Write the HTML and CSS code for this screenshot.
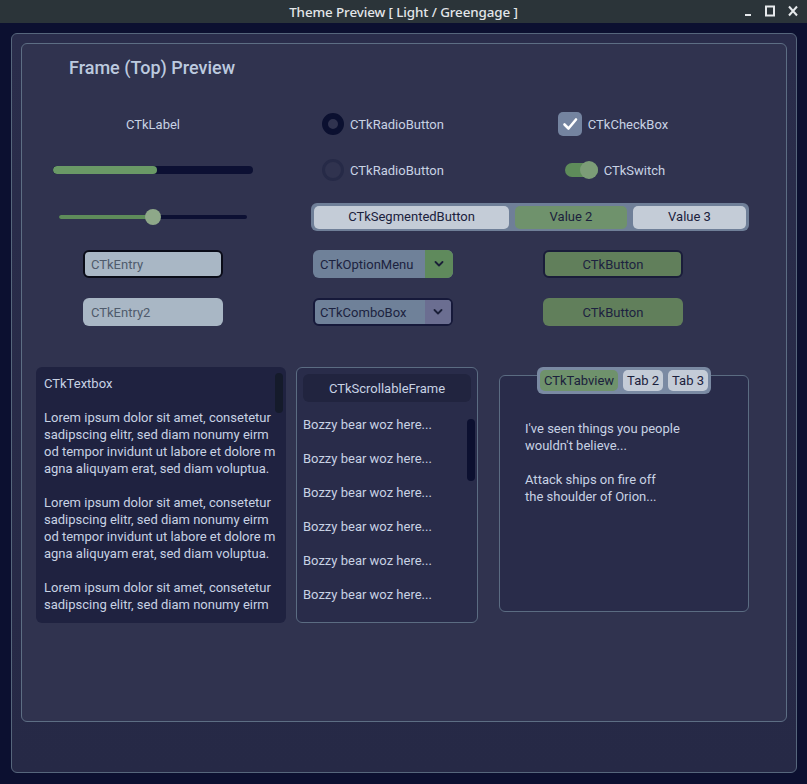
FILE: index.html
```html
<!DOCTYPE html>
<html>
<head>
<meta charset="utf-8">
<link rel="stylesheet" href="styles.css">
</head>
<body>
<div class="titlebar">
  <span class="title">Theme Preview [ Light / Greengage ]</span>
  <div class="controls">
    <svg width="10" height="12" viewBox="0 0 10 12"><rect x="2" y="9" width="6" height="2" fill="#e6e9ec"/></svg>
    <svg width="12" height="12" viewBox="0 0 12 12"><rect x="2" y="1.5" width="8" height="9" fill="none" stroke="#e6e9ec" stroke-width="2"/></svg>
    <svg width="12" height="12" viewBox="0 0 12 12"><path d="M2 1.5 L10 10.5 M10 1.5 L2 10.5" stroke="#e6e9ec" stroke-width="2"/></svg>
  </div>
</div>
<div class="window">
  <div class="outer">
    <div class="inner">
      <h1 class="frame-title">Frame (Top) Preview</h1>
      <div class="grid">
        <div class="cell c-center label">CTkLabel</div>
        <div class="cell c-center radio"><span class="radio-dot on"></span><span>CTkRadioButton</span></div>
        <div class="cell c-center check"><span class="check-box"><svg width="24" height="24" viewBox="0 0 24 24"><path d="M6.5 12.5 L10.5 16.5 L18 7.5" fill="none" stroke="#ffffff" stroke-width="2.6" stroke-linecap="round" stroke-linejoin="round"/></svg></span><span>CTkCheckBox</span></div>

        <div class="cell c-center"><div class="progress"><div class="progress-fill"></div></div></div>
        <div class="cell c-center radio"><span class="radio-dot"></span><span>CTkRadioButton</span></div>
        <div class="cell c-center switch-wrap"><span class="switch"><span class="switch-knob"></span></span><span>CTkSwitch</span></div>

        <div class="cell c-center"><div class="slider"><div class="slider-track"><div class="slider-fill"></div></div><div class="slider-knob"></div></div></div>
        <div class="cell segmented">
          <span class="seg seg-1">CTkSegmentedButton</span>
          <span class="seg seg-2 active">Value 2</span>
          <span class="seg seg-3">Value 3</span>
        </div>

        <div class="cell c-center"><div class="entry focused">CTkEntry</div></div>
        <div class="cell c-center"><div class="option"><span class="option-text">CTkOptionMenu</span><span class="option-btn green"><svg width="10" height="6" viewBox="0 0 10 6"><path d="M1.5 1 L5 4.5 L8.5 1" fill="none" stroke="#1a1f38" stroke-width="1.8" stroke-linecap="round" stroke-linejoin="round"/></svg></span></div></div>
        <div class="cell c-center"><div class="button bordered">CTkButton</div></div>

        <div class="cell c-center"><div class="entry">CTkEntry2</div></div>
        <div class="cell c-center"><div class="option combo"><span class="option-text">CTkComboBox</span><span class="option-btn purple"><svg width="10" height="6" viewBox="0 0 10 6"><path d="M1.5 1 L5 4.5 L8.5 1" fill="none" stroke="#1a1f38" stroke-width="1.8" stroke-linecap="round" stroke-linejoin="round"/></svg></span></div></div>
        <div class="cell c-center"><div class="button">CTkButton</div></div>
      </div>

      <div class="bottom">
        <div class="textbox">
          <div class="tb-line">CTkTextbox</div>
          <div class="tb-line">&nbsp;</div>
          <div class="tb-line">Lorem ipsum dolor sit amet, consetetur</div>
          <div class="tb-line">sadipscing elitr, sed diam nonumy eirm</div>
          <div class="tb-line">od tempor invidunt ut labore et dolore m</div>
          <div class="tb-line">agna aliquyam erat, sed diam voluptua.</div>
          <div class="tb-line">&nbsp;</div>
          <div class="tb-line">Lorem ipsum dolor sit amet, consetetur</div>
          <div class="tb-line">sadipscing elitr, sed diam nonumy eirm</div>
          <div class="tb-line">od tempor invidunt ut labore et dolore m</div>
          <div class="tb-line">agna aliquyam erat, sed diam voluptua.</div>
          <div class="tb-line">&nbsp;</div>
          <div class="tb-line">Lorem ipsum dolor sit amet, consetetur</div>
          <div class="tb-line">sadipscing elitr, sed diam nonumy eirm</div>
          <div class="tb-scroll"></div>
        </div>

        <div class="scrollable">
          <div class="sf-label">CTkScrollableFrame</div>
          <div class="sf-items">
            <div class="sf-item">Bozzy bear woz here...</div>
            <div class="sf-item">Bozzy bear woz here...</div>
            <div class="sf-item">Bozzy bear woz here...</div>
            <div class="sf-item">Bozzy bear woz here...</div>
            <div class="sf-item">Bozzy bear woz here...</div>
            <div class="sf-item">Bozzy bear woz here...</div>
          </div>
          <div class="sf-scroll"></div>
        </div>

        <div class="tabview">
          <div class="tabs">
            <span class="tab active">CTkTabview</span>
            <span class="tab">Tab 2</span>
            <span class="tab">Tab 3</span>
          </div>
          <div class="tab-frame">
            <div>I've seen things you people</div>
            <div>wouldn't believe...</div>
            <div>&nbsp;</div>
            <div>Attack ships on fire off</div>
            <div>the shoulder of Orion...</div>
          </div>
        </div>
      </div>
    </div>
  </div>
</div>
</body>
</html>
```
FILE: styles.css
```css
* { box-sizing: border-box; }
html, body {
  margin: 0;
  padding: 0;
  width: 807px;
  height: 784px;
  overflow: hidden;
  background: #0c1030;
  font-family: Roboto, "Liberation Sans", sans-serif;
  font-size: 13px;
  color: #c8d2e4;
}
.titlebar {
  height: 23px;
  background: #2b3439;
  display: flex;
  align-items: center;
  justify-content: center;
  position: relative;
}
.title {
  font-family: "Noto Sans", "DejaVu Sans", sans-serif;
  font-weight: 500;
  font-size: 13.4px;
  color: #e3e6e9;
  letter-spacing: -0.1px;
}
.controls {
  position: absolute;
  right: 8px;
  top: 5px;
  display: flex;
  gap: 11px;
}
.window {
  padding: 10px 10px 11px 11px;
  height: 761px;
}
.outer {
  height: 740px;
  border: 1px solid #56667c;
  border-radius: 6px;
  background: linear-gradient(#2a2d4b, #262946);
  padding: 9px;
}
.inner {
  height: 679px;
  border: 1px solid #5d6e84;
  border-radius: 6px;
  background: #30334f;
}
.frame-title {
  margin: 0 0 0 47px;
  height: 57px;
  padding-top: 12px;
  font-size: 18px;
  line-height: 24px;
  font-weight: 500;
  color: #bccadf;
}
.grid {
  margin-left: 16px;
  display: grid;
  grid-template-columns: 230px 230px 230px;
  grid-template-rows: 46px 46px 47px 48px 48px;
}
.cell { display: flex; align-items: center; }
.c-center { justify-content: center; }

.radio, .check, .switch-wrap { gap: 6px; }
.radio-dot {
  width: 22px; height: 22px;
  border-radius: 50%;
  border: 3px solid #262a47;
}
.radio-dot.on { border: 6px solid #0b1030; }
.check-box {
  width: 24px; height: 24px;
  border-radius: 5px;
  background: #7484a0;
  display: flex;
}
.switch-wrap { padding-left: 4px; }
.switch {
  width: 33px; height: 14px;
  border-radius: 7px;
  background: #5e8c5a;
  display: flex;
  align-items: center;
  justify-content: flex-end;
}
.switch-knob {
  width: 18px; height: 18px;
  border-radius: 50%;
  background: #7c9d77;
}
.progress {
  width: 200px; height: 8px;
  border-radius: 4px;
  background: #0c1033;
  overflow: hidden;
}
.progress-fill { width: 104px; height: 8px; border-radius: 4px; background: #6a9966; }
.slider {
  width: 200px; height: 16px;
  padding: 0 6px;
  display: flex;
  align-items: center;
  position: relative;
}
.slider-track {
  width: 188px; height: 4px;
  border-radius: 2px;
  background: #0c1033;
}
.slider-fill { width: 94px; height: 4px; border-radius: 2px; background: #5e8c5a; }
.slider-knob {
  position: absolute;
  left: 92px; top: 0;
  width: 16px; height: 16px;
  border-radius: 50%;
  background: #8ea889;
}
.segmented {
  grid-column: 2 / span 2;
  margin-left: 43px;
  width: 438px;
  height: 28px;
  align-self: center;
  background: #6f7f98;
  border-radius: 6px;
  padding: 3px 2px 2px 3px;
  gap: 6px;
  align-items: stretch;
}
.seg {
  border-radius: 5px;
  background: #c4ccd7;
  color: #1b213c;
  display: flex;
  align-items: center;
  justify-content: center;
  padding-bottom: 1px;
}
.seg-1 { width: 195px; }
.seg-2 { width: 112px; }
.seg-3 { width: 113px; }
.seg.active { background: #6f926c; }
.entry {
  width: 140px; height: 28px;
  border-radius: 6px;
  background: #a9b7c5;
  color: #4f5b6c;
  padding-left: 8px;
  display: flex;
  align-items: center;
}
.entry.focused { border: 2px solid #0a0c18; padding-left: 6px; }
.option {
  width: 140px; height: 28px;
  border-radius: 6px;
  background: #6f8199;
  display: flex;
  overflow: hidden;
  color: #1c2340;
}
.option-text { flex: 1; display: flex; align-items: center; padding-left: 7px; }
.option-btn {
  width: 28px;
  display: flex; align-items: center; justify-content: center;
}
.option-btn.green { background: #5f8a5c; }
.option-btn.purple { background: #6b6e91; }
.option.combo { border: 2px solid #16193a; }
.option.combo .option-text { padding-left: 5px; }
.option.combo .option-btn { width: 26px; }
.button {
  width: 140px; height: 28px;
  border-radius: 6px;
  background: #617f5b;
  color: #1d2240;
  display: flex; align-items: center; justify-content: center;
}
.button.bordered { border: 2px solid #1a1d3a; }

.bottom {
  display: flex;
  align-items: flex-start;
  margin: 31px 0 0 14px;
}
.textbox {
  width: 250px; height: 256px;
  border-radius: 6px;
  background: #1f2240;
  padding: 8px 0 0 8px;
  line-height: 17px;
  overflow: hidden;
  position: relative;
  white-space: nowrap;
}
.tb-scroll {
  position: absolute;
  left: 239px; top: 6px;
  width: 8px; height: 40px;
  border-radius: 4px;
  background: #151b2b;
}
.scrollable {
  margin-left: 10px;
  width: 182px; height: 256px;
  border: 1px solid #5b6c82;
  border-radius: 6px;
  background: #292c4a;
  padding: 6px;
  overflow: hidden;
  position: relative;
}
.sf-label {
  height: 28px;
  border-radius: 6px;
  background: #21243f;
  display: flex; align-items: center; justify-content: center;
}
.sf-items { margin-top: 6px; }
.sf-item { height: 34px; line-height: 34px; white-space: nowrap; }
.sf-scroll {
  position: absolute;
  left: 170px; top: 51px;
  width: 8px; height: 62px;
  border-radius: 4px;
  background: #0c1030;
}
.tabview {
  margin-left: 21px;
  width: 250px;
  display: flex;
  flex-direction: column;
  align-items: center;
}
.tabs {
  position: relative;
  z-index: 1;
  height: 27px;
  background: #7a8aa3;
  border-radius: 6px;
  padding: 3px;
  display: flex;
  gap: 5px;
  color: #1b213c;
}
.tab {
  border-radius: 5px;
  background: #c4ccd7;
  padding: 0 4px;
  display: flex; align-items: center;
}
.tab.active { background: #6f926c; }
.tab-frame {
  margin-top: -19px;
  width: 250px; height: 237px;
  border: 1px solid #5b6c82;
  border-radius: 6px;
  background: #292c4a;
  padding: 44px 0 0 25px;
  line-height: 17px;
}
```
